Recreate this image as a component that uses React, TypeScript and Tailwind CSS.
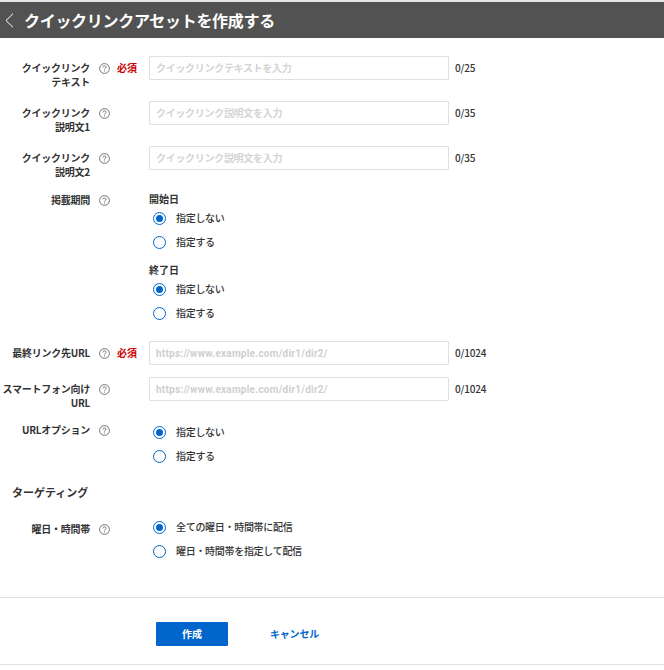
import React from "react";

const font = { fontFamily: '"Noto Sans CJK JP", "Noto Sans", sans-serif' };

function Help() {
  return (
    <svg width="11" height="11" viewBox="0 0 11 11" fill="none" className="shrink-0">
      <circle cx="5.5" cy="5.5" r="4.9" stroke="#666" strokeWidth="0.9" />
      <path d="M3.9 4.4c0-.9.7-1.5 1.6-1.5s1.6.6 1.6 1.4c0 1.1-1.6 1.2-1.6 2.3" stroke="#666" strokeWidth="0.9" />
      <circle cx="5.5" cy="8" r="0.6" fill="#666" />
    </svg>
  );
}

function Radio({ on, label }: { on?: boolean; label: string }) {
  return (
    <div className="flex h-6 items-center">
      <span className="ml-[4px] flex h-[13px] w-[13px] shrink-0 items-center justify-center rounded-full border border-[#0066cc] bg-white">
        {on && <span className="h-[7px] w-[7px] rounded-full bg-[#0066cc]" />}
      </span>
      <span className="-mt-[1px] ml-[10px] text-[10px] font-medium tracking-[-0.3px] text-[#333]">{label}</span>
    </div>
  );
}

function Label({ lines, required }: { lines: string[]; required?: boolean }) {
  return (
    <div className="flex w-[149px] shrink-0 items-start pt-[5px]">
      <div className="w-[90px] shrink-0 text-right text-[10px] font-bold leading-[14px] tracking-[-0.25px] text-[#333]">
        {lines.map((l) => (
          <div key={l}>{l}</div>
        ))}
      </div>
      <div className="ml-[9px] mt-[2px]">
        <Help />
      </div>
      {required && <span className="ml-[7px] text-[10px] font-bold leading-[14px] text-[#cc0000]">必須</span>}
    </div>
  );
}

function Field({ placeholder, count, url }: { placeholder: string; count: string; url?: boolean }) {
  return (
    <div className="flex items-center">
      <input
        readOnly
        placeholder={placeholder}
        style={url ? { fontFamily: 'Roboto, "Noto Sans", sans-serif' } : undefined}
        className={
          url
            ? "h-6 w-[300px] rounded-[1px] border border-[#e0e0e0] bg-white px-[6px] text-[10px] font-bold tracking-[0.24px] outline-none placeholder:text-[#cfcfcf]"
            : "h-6 w-[300px] rounded-[1px] border border-[#e0e0e0] bg-white px-[6px] pb-[2px] text-[10px] font-bold tracking-[-0.3px] outline-none placeholder:text-[#d4d4d4]"
        }
      />
      <span className="-mt-[1px] ml-[6px] text-[10px] font-medium tracking-[-0.2px] text-[#333]">{count}</span>
    </div>
  );
}

export default function App() {
  return (
    <div style={font} className="h-[670px] w-[664px] overflow-hidden bg-white">
      <div className="h-[2px] bg-[#e5e5e5]" />
      <div className="flex h-9 items-center bg-[#525252] text-white">
        <svg width="9" height="15" viewBox="0 0 9 15" fill="none" className="ml-[5px]">
          <path d="M8 .7 1 7.5l7 6.8" stroke="#fff" strokeWidth="1" />
        </svg>
        <span className="ml-[10px] text-[16px] font-bold tracking-[-0.3px]">クイックリンクアセットを作成する</span>
      </div>

      <div className="flex items-start pt-[18px]">
        <Label lines={["クイックリンク", "テキスト"]} required />
        <Field placeholder="クイックリンクテキストを入力" count="0/25" />
      </div>
      <div className="flex items-start pt-3">
        <Label lines={["クイックリンク", "説明文1"]} />
        <Field placeholder="クイックリンク説明文を入力" count="0/35" />
      </div>
      <div className="flex items-start pt-3">
        <Label lines={["クイックリンク", "説明文2"]} />
        <Field placeholder="クイックリンク説明文を入力" count="0/35" />
      </div>

      <div className="flex items-start pt-[9px]">
        <Label lines={["掲載期間"]} />
        <div>
          <div className="mt-[3px] text-[10px] font-bold leading-[15px] text-[#333]">開始日</div>
          <Radio on label="指定しない" />
          <Radio label="指定する" />
          <div className="mt-[8px] text-[10px] font-bold leading-[15px] text-[#333]">終了日</div>
          <Radio on label="指定しない" />
          <Radio label="指定する" />
        </div>
      </div>

      <div className="flex items-start pt-[16px]">
        <Label lines={["最終リンク先URL"]} required />
        <Field url placeholder="https://www.example.com/dir1/dir2/" count="0/1024" />
      </div>
      <div className="flex items-start pt-3">
        <Label lines={["スマートフォン向け", "URL"]} />
        <Field url placeholder="https://www.example.com/dir1/dir2/" count="0/1024" />
      </div>

      <div className="flex items-start pt-2">
        <Label lines={["URLオプション"]} />
        <div className="mt-[2px]">
          <Radio on label="指定しない" />
          <Radio label="指定する" />
        </div>
      </div>

      <div className="ml-3 mt-[14px] text-[11px] font-bold leading-[20px] text-[#333]">ターゲティング</div>

      <div className="flex items-start pt-[13px]">
        <div className="mt-[2px]">
          <Label lines={["曜日・時間帯"]} />
        </div>
        <div>
          <Radio on label="全ての曜日・時間帯に配信" />
          <Radio label="曜日・時間帯を指定して配信" />
        </div>
      </div>

      <div className="mt-[34px] border-t border-[#e0e0e0] pb-[18px] pl-[156px] pt-6">
        <div className="flex items-center">
          <button className="h-6 w-[72px] rounded-[1px] bg-[#0066cc] pb-[2px] text-[10px] font-bold text-white">作成</button>
          <span className="-mt-[1px] ml-[42px] text-[10px] font-bold tracking-[-0.2px] text-[#0066cc]">キャンセル</span>
        </div>
      </div>
      <div className="border-t border-[#e0e0e0]" />
    </div>
  );
}
